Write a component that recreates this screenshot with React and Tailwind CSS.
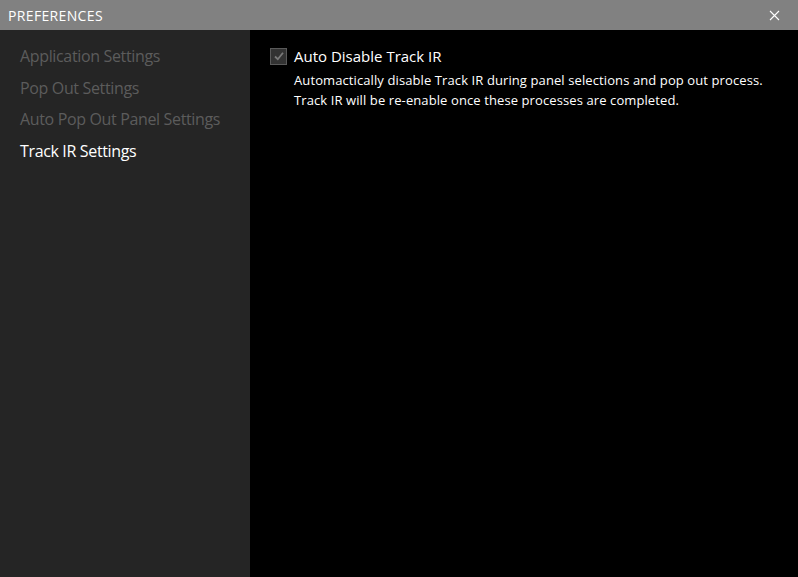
import React, { useState } from "react";

const menuItems = [
  "Application Settings",
  "Pop Out Settings",
  "Auto Pop Out Panel Settings",
  "Track IR Settings",
];

export default function App() {
  const [active, setActive] = useState(3);
  const [checked, setChecked] = useState(true);

  return (
    <div
      className="w-[798px] h-[577px] flex flex-col bg-black text-white overflow-hidden"
      style={{ fontFamily: '"Open Sans", "Noto Sans", sans-serif' }}
    >
      {/* Title bar */}
      <div className="h-[30px] shrink-0 flex items-center justify-between bg-[#818181] pl-[8px] pr-[18px]">
        <span className="text-[14px] tracking-[0.35px] text-white">PREFERENCES</span>
        <svg width="11" height="11" viewBox="0 0 11 11" className="text-white">
          <path d="M1 1L10 10M10 1L1 10" stroke="currentColor" strokeWidth="1.1" />
        </svg>
      </div>

      <div className="flex flex-1 min-h-0">
        {/* Sidebar */}
        <div className="w-[250px] shrink-0 bg-[#252525] pt-[11px] pl-[20px] flex flex-col">
          {menuItems.map((item, i) => (
            <button
              key={item}
              type="button"
              onClick={() => setActive(i)}
              className={`text-left h-[31.5px] text-[16px] tracking-[-0.35px] leading-[31px] ${
                i === active ? "text-white" : "text-[#5c5c5c]"
              }`}
            >
              {item}
            </button>
          ))}
        </div>

        {/* Content */}
        <div className="flex-1 pt-[16px] pl-[20px]">
          <label className="flex items-center gap-[7px] cursor-pointer">
            <span
              onClick={() => setChecked(!checked)}
              className="w-[17px] h-[17px] border border-[#5a5a5a] bg-[#333333] flex items-center justify-center"
            >
              {checked && (
                <svg width="12" height="12" viewBox="0 0 12 12">
                  <path d="M2 6.5L4.8 9.2L10 2.8" fill="none" stroke="#7a7a7a" strokeWidth="1.8" />
                </svg>
              )}
            </span>
            <span className="text-[15px] leading-[20px]">Auto Disable Track IR</span>
          </label>
          <div className="pl-[24px] mt-[4px] text-[13px] tracking-[0.1px] leading-[20px] text-white">
            <p>Automactically disable Track IR during panel selections and pop out process.</p>
            <p>Track IR will be re-enable once these processes are completed.</p>
          </div>
        </div>
      </div>
    </div>
  );
}
